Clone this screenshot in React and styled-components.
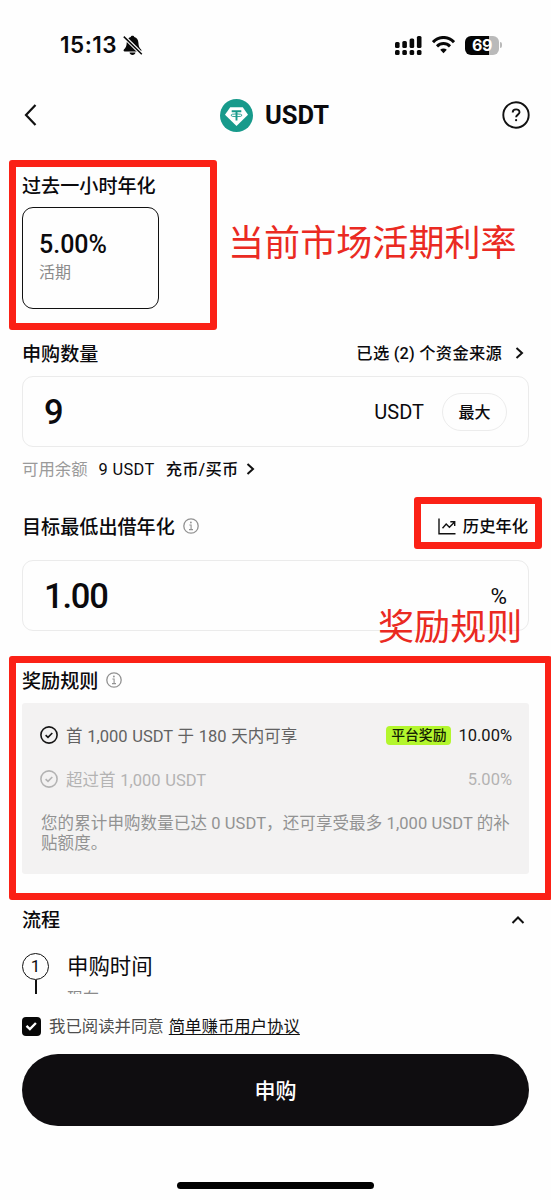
import React from "react";
import styled, { createGlobalStyle } from "styled-components";

const GlobalStyle = createGlobalStyle`
  * { box-sizing: border-box; }
  body {
    margin: 0;
    background: #fefefe;
    color: #0b0a0d;
    font-family: Roboto, "Noto Sans CJK SC", sans-serif;
    overflow: hidden;
  }
  svg { display: block; flex: none; }
`;

const Phone = styled.div`
  position: relative;
  display: flex;
  flex-direction: column;
  width: 551px;
  height: 1200px;
  overflow: hidden;
  background: #fefefe;
`;

const StatusBar = styled.div`
  display: flex;
  justify-content: space-between;
  align-items: center;
  height: 90px;
  padding: 0 49px 0 60px;
`;

const StatusGroup = styled.div`
  display: flex;
  align-items: center;
  gap: ${(p) => p.$gap}px;
`;

const Clock = styled.span`
  font: 600 22.5px/30px Inter, sans-serif;
  letter-spacing: 0.5px;
`;

const Battery = styled.div`
  width: 34px;
  height: 19px;
  border-radius: 6px;
  background: linear-gradient(90deg, #050505 71%, #bababa 71%);
  color: #fff;
  font: 700 16px/19px Inter, sans-serif;
  letter-spacing: -0.5px;
  text-align: center;
`;

const BatteryTip = styled.div`
  width: 2px;
  height: 6px;
  margin-left: -9px;
  border-radius: 0 2px 2px 0;
  background: #bababa;
`;

const Header = styled.header`
  display: flex;
  justify-content: space-between;
  align-items: center;
  height: 50px;
  padding: 0 21px 0 24px;
`;

const Coin = styled.div`
  display: flex;
  align-items: center;
  gap: 12px;
  margin-left: 9px;
  font-size: 25.5px;
  font-weight: 700;
`;

const Content = styled.main`
  display: flex;
  flex-direction: column;
  height: 854px;
  padding: 30px 22px 0;
  overflow: hidden;
`;

const SectionRow = styled.div`
  display: flex;
  flex: none;
  align-items: center;
  justify-content: space-between;
  height: 30px;
  margin-top: ${(p) => p.$top || 0}px;
  padding-right: ${(p) => p.$right || 0}px;
`;

const SectionTitle = styled.h2`
  display: flex;
  align-items: center;
  gap: 8px;
  margin: 0;
  padding-top: 3px;
  font-size: 19.1px;
  line-height: 30px;
  font-weight: 500;
  white-space: nowrap;

  svg {
    margin-top: -3px;
  }
`;

const RateCard = styled.div`
  flex: none;
  width: 137px;
  height: 102px;
  margin-top: 7px;
  padding: 23px 0 0 16px;
  border: 1.4px solid #111;
  border-radius: 11px;
`;

const RateValue = styled.div`
  font-size: 25px;
  line-height: 28px;
  font-weight: 500;
`;

const RateLabel = styled.div`
  padding-top: 1px;
  font-size: 16px;
  line-height: 26px;
  color: #8b8b8b;
`;

const LinkText = styled.span`
  display: flex;
  align-items: center;
  gap: ${(p) => p.$gap}px;
  font-size: 16.3px;
  line-height: 24px;
  font-weight: 500;
  letter-spacing: ${(p) => p.$tracking || 0}px;
  white-space: nowrap;
`;

const LinkLabel = styled.span`
  margin-top: 2px;
`;

const InputBox = styled.div`
  display: flex;
  flex: none;
  align-items: center;
  justify-content: space-between;
  height: 71px;
  margin-top: ${(p) => p.$top}px;
  padding: 0 21px 0 21px;
  border: 1px solid #ebebeb;
  border-radius: 11px;
`;

const InputValue = styled.span`
  padding-top: 1px;
  font-size: 34.5px;
  font-weight: 500;
  letter-spacing: -1.2px;
`;

const Unit = styled.span`
  font-size: ${(p) => p.$size || 20}px;
`;

const UnitGroup = styled.div`
  display: flex;
  align-items: center;
  gap: 18px;
`;

const MaxButton = styled.button`
  width: 65px;
  height: 38px;
  padding: 0;
  border: 1px solid #ececec;
  border-radius: 19px;
  background: #fefefe;
  color: inherit;
  font: 500 16px/38px Roboto, "Noto Sans CJK SC", sans-serif;
`;

const BalanceRow = styled.div`
  display: flex;
  flex: none;
  align-items: center;
  height: 28px;
  margin-top: 8px;
  font-size: 16.4px;
  line-height: 24px;
  white-space: nowrap;
`;

const Muted = styled.span`
  margin-top: 2px;
  color: #9a9a9a;
`;

const BalanceValue = styled.span`
  margin: 2px 11px 0 11px;
  letter-spacing: 0.35px;
`;

const RewardPanel = styled.section`
  flex: none;
  height: 171px;
  margin-top: 8px;
  padding: 17px 17px 0 18px;
  border-radius: 3px;
  background: #f3f2f2;
`;

const RewardRow = styled.div`
  display: flex;
  align-items: center;
  justify-content: space-between;
  height: 30px;
  margin-bottom: 14px;
  font-size: 16.5px;
  word-spacing: 0.6px;
  white-space: nowrap;
  color: ${(p) => (p.$dim ? "#b3b3b3" : "#626262")};
`;

const RewardSide = styled.div`
  display: flex;
  align-items: center;
  gap: ${(p) => p.$gap || 8}px;
`;

const RewardRate = styled.span`
  font-size: 16.5px;
  color: ${(p) => (p.$dim ? "#b3b3b3" : "#151515")};
`;

const Badge = styled.span`
  padding: 0 5px;
  border-radius: 4px;
  background: #b3f62d;
  color: #122003;
  font-size: 13.8px;
  line-height: 19px;
  font-weight: 500;
`;

const Note = styled.p`
  margin: 20px 0 0 1px;
  font-size: 16.5px;
  line-height: 19.5px;
  letter-spacing: 0.1px;
  color: #929292;
  white-space: nowrap;
`;

const Step = styled.div`
  display: flex;
  flex: none;
  gap: 18px;
  height: 60px;
  margin-top: 19px;
`;

const StepMarker = styled.div`
  display: flex;
  flex-direction: column;
  align-items: center;
  width: 27px;

  &::after {
    content: "";
    width: 2px;
    flex: 1;
    background: #111;
  }
`;

const StepNumber = styled.div`
  width: 27px;
  height: 27px;
  border: 1.5px solid #111;
  border-radius: 50%;
  font-size: 17px;
  line-height: 25px;
  text-align: center;
`;

const StepName = styled.div`
  font-size: 21.4px;
  line-height: 27px;
`;

const StepTime = styled.div`
  margin-top: 7px;
  font-size: 16px;
  line-height: 24px;
  color: #8b8b8b;
`;

const Agreement = styled.label`
  display: flex;
  align-items: center;
  height: 30px;
  margin: 17px 22px 0;
  font-size: 16.4px;
  line-height: 24px;
  white-space: nowrap;
  color: #4e4e4e;
`;

const AgreementText = styled.span`
  margin-top: 2px;
`;

const AgreementLink = styled.a`
  margin-left: 5px;
  color: #111;
  text-decoration: underline;
  text-decoration-thickness: 1px;
  text-underline-offset: 2px;
`;

const CheckBox = styled.span`
  display: flex;
  align-items: center;
  justify-content: center;
  width: 19px;
  height: 19px;
  margin-right: 8px;
  border-radius: 4px;
  background: #070707;
`;

const SubmitButton = styled.button`
  flex: none;
  height: 72px;
  margin: 13px 22px 0;
  border: 0;
  border-radius: 36px;
  background: #0f0d10;
  color: #fff;
  font: 500 21px/72px Roboto, "Noto Sans CJK SC", sans-serif;
`;

const HomeIndicator = styled.div`
  width: 197px;
  height: 7px;
  margin: 56px auto 0;
  border-radius: 4px;
  background: #000;
`;

const MarkFrame = styled.div`
  position: absolute;
  left: ${(p) => p.$x}px;
  top: ${(p) => p.$y}px;
  width: ${(p) => p.$w}px;
  height: ${(p) => p.$h}px;
  border: 7px solid #fb2116;
  border-radius: 3px;
`;

const MarkText = styled.div`
  position: absolute;
  left: ${(p) => p.$x}px;
  top: ${(p) => p.$y}px;
  font: 400 36.1px/44px "Noto Sans CJK SC", sans-serif;
  color: #ea2a22;
  white-space: nowrap;
`;

const Chevron = ({ width = 8, height = 14, d, stroke = 2 }) => (
  <svg width={width} height={height} fill="none" stroke="#111" strokeWidth={stroke}>
    <path d={d} />
  </svg>
);

const ChevronRight = () => <Chevron width={9} height={12} d="M1.5 1l5.5 5-5.5 5" />;

const InfoIcon = () => (
  <svg width="16" height="16" fill="none" stroke="#929292" strokeWidth="1.3">
    <circle cx="8" cy="8" r="7.2" />
    <path d="M6.4 7h1.7v4.4M6 11.6h4" strokeWidth="1.1" />
    <circle cx="7.9" cy="4.5" r=".9" fill="#929292" stroke="none" />
  </svg>
);

const CheckCircle = ({ color }) => (
  <svg width="18" height="18" fill="none" stroke={color} strokeWidth="1.6">
    <circle cx="9" cy="9" r="8.1" />
    <path d="M5.6 9.1l2.4 2.3 4.3-4.4" />
  </svg>
);

const BellOff = () => (
  <svg width="20" height="21" viewBox="0 0 20 21">
    <path
      d="M9.5.8c.9 0 1.6.5 1.8 1.3 2.5.8 4 2.9 4.1 5.6.1 3.500.9 4.900 2.700 6.900.7.8.4 1.900-.7 1.900H1.700c-1.100 0-1.500-1.100-.8-1.900 1.800-2 2.700-3.400 2.800-6.900C3.800 5 5.200 2.900 7.700 2.100 7.900 1.300 8.600.8 9.500.8z"
      fill="#080808"
    />
    <path d="M6.5 17.6h6c-.3 1.400-1.500 2.300-3 2.300s-2.700-.9-3-2.300z" fill="#080808" />
    <path d="M1 1.6l18 17.8" stroke="#fefefe" strokeWidth="3.6" />
    <path d="M.8 1.6l18 17.6" stroke="#080808" strokeWidth="1.5" />
  </svg>
);

const Signal = () => (
  <svg width="27" height="19" fill="#080808">
    {[6, 5, 2.5, 0].map((y, i) => (
      <g key={y}>
        <rect x={i * 7.3} y={y} width="4.6" height={12 - y} rx="1.5" />
        <rect x={i * 7.3} y="14" width="4.6" height="5" rx="1.5" />
      </g>
    ))}
  </svg>
);

const Wifi = () => (
  <svg width="23" height="18" fill="none" stroke="#080808" strokeWidth="3">
    <path d="M1 6.1C7-.1 16-.1 22 6.1" />
    <path d="M5 10.4c3.8-3.8 9.2-3.8 13 0" />
    <path d="M11.5 17.3l-3.300-3.500c1.900-1.800 4.700-1.800 6.600 0z" fill="#080808" stroke="none" />
  </svg>
);

const Tether = () => (
  <svg width="33" height="33" viewBox="0 0 33 33">
    <circle cx="16.5" cy="16.5" r="16.5" fill="#179a8b" />
    <path d="M10.2 8.2h12.6l5.2 7.5L16.5 27 5 15.7z" fill="#fff" />
    <path d="M11.7 12.2h9.6M16.5 12.2v9.3" stroke="#179a8b" strokeWidth="1.9" />
    <ellipse cx="16.5" cy="16.3" rx="5.6" ry="1.4" fill="none" stroke="#179a8b" strokeWidth=".9" />
  </svg>
);

const HelpIcon = () => (
  <svg width="28" height="28" fill="none" stroke="#111" strokeWidth="1.9">
    <circle cx="14" cy="14" r="12.7" />
    <path d="M10.7 11.6c0-4.2 6.8-4.2 6.8-.3 0 2.4-3.4 2.3-3.4 5" />
    <circle cx="14.1" cy="19.2" r="1.1" fill="#111" stroke="none" />
  </svg>
);

const ChartIcon = () => (
  <svg width="18" height="17" fill="none" stroke="#111" strokeWidth="1.4">
    <path d="M1 .5v15.300h16.500M4.500 10.300l3.700-4.200 3.200 3.100 5-5M12.300 3.700h4.400V8" />
  </svg>
);

export default function App() {
  return (
    <>
      <GlobalStyle />
      <Phone>
        <StatusBar>
          <StatusGroup $gap={6}>
            <Clock>15:13</Clock>
            <BellOff />
          </StatusGroup>
          <StatusGroup $gap={10}>
            <Signal />
            <Wifi />
            <Battery>69</Battery>
            <BatteryTip />
          </StatusGroup>
        </StatusBar>

        <Header>
          <Chevron width={14} height={22} d="M11.5 1L2 11l9.5 10" stroke={2.2} />
          <Coin>
            <Tether />
            USDT
          </Coin>
          <HelpIcon />
        </Header>

        <Content>
          <SectionRow>
            <SectionTitle>过去一小时年化</SectionTitle>
          </SectionRow>
          <RateCard>
            <RateValue>5.00%</RateValue>
            <RateLabel>活期</RateLabel>
          </RateCard>

          <SectionRow $top={29} $right={5}>
            <SectionTitle>申购数量</SectionTitle>
            <LinkText $gap={13} $tracking={0.25}>
              <LinkLabel>已选 (2) 个资金来源</LinkLabel>
              <ChevronRight />
            </LinkText>
          </SectionRow>
          <InputBox $top={8}>
            <InputValue>9</InputValue>
            <UnitGroup>
              <Unit>USDT</Unit>
              <MaxButton>最大</MaxButton>
            </UnitGroup>
          </InputBox>
          <BalanceRow>
            <Muted>可用余额</Muted>
            <BalanceValue>9 USDT</BalanceValue>
            <LinkText $gap={7} $tracking={0.3}>
              <LinkLabel>充币/买币</LinkLabel>
              <ChevronRight />
            </LinkText>
          </BalanceRow>

          <SectionRow $top={28} $right={1}>
            <SectionTitle>
              目标最低出借年化
              <InfoIcon />
            </SectionTitle>
            <LinkText $gap={7}>
              <ChartIcon />
              <LinkLabel>历史年化</LinkLabel>
            </LinkText>
          </SectionRow>
          <InputBox $top={19}>
            <InputValue>1.00</InputValue>
            <Unit $size={22.5}>%</Unit>
          </InputBox>

          <SectionRow $top={34}>
            <SectionTitle>
              奖励规则
              <InfoIcon />
            </SectionTitle>
          </SectionRow>
          <RewardPanel>
            <RewardRow>
              <RewardSide>
                <CheckCircle color="#151515" />
                首 1,000 USDT 于 180 天内可享
              </RewardSide>
              <RewardSide $gap={7}>
                <Badge>平台奖励</Badge>
                <RewardRate>10.00%</RewardRate>
              </RewardSide>
            </RewardRow>
            <RewardRow $dim>
              <RewardSide>
                <CheckCircle color="#b3b3b3" />
                超过首 1,000 USDT
              </RewardSide>
              <RewardRate $dim>5.00%</RewardRate>
            </RewardRow>
            <Note>
              您的累计申购数量已达 0 USDT，还可享受最多 1,000 USDT 的补
              <br />
              贴额度。
            </Note>
          </RewardPanel>

          <SectionRow $top={30}>
            <SectionTitle>流程</SectionTitle>
            <Chevron width={22} height={9} d="M5.5 8L11 2.5 16.5 8" />
          </SectionRow>
          <Step>
            <StepMarker>
              <StepNumber>1</StepNumber>
            </StepMarker>
            <div>
              <StepName>申购时间</StepName>
              <StepTime>现在</StepTime>
            </div>
          </Step>
        </Content>

        <Agreement>
          <CheckBox>
            <svg width="13" height="10" fill="none" stroke="#fff" strokeWidth="2.4">
              <path d="M1.5 4.8l3.4 3.2 6-6" />
            </svg>
          </CheckBox>
          <AgreementText>
            我已阅读并同意
            <AgreementLink>简单赚币用户协议</AgreementLink>
          </AgreementText>
        </Agreement>
        <SubmitButton>申购</SubmitButton>
        <HomeIndicator />

        <MarkFrame $x={9} $y={160} $w={208} $h={170} />
        <MarkFrame $x={414} $y={497} $w={128} $h={52} />
        <MarkFrame $x={9} $y={656} $w={543} $h={244} />
        <MarkText $x={228} $y={218}>当前市场活期利率</MarkText>
        <MarkText $x={378} $y={602}>奖励规则</MarkText>
      </Phone>
    </>
  );
}
